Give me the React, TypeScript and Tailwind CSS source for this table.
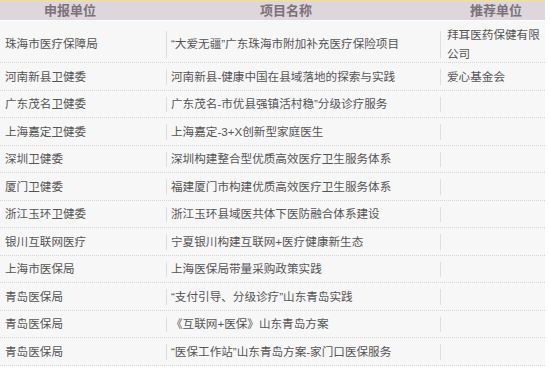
const rows: [string, string, string][] = [
  ["珠海市医疗保障局", "“大爱无疆”广东珠海市附加补充医疗保险项目", "拜耳医药保健有限公司"],
  ["河南新县卫健委", "河南新县-健康中国在县域落地的探索与实践", "爱心基金会"],
  ["广东茂名卫健委", "广东茂名-市优县强镇活村稳”分级诊疗服务", ""],
  ["上海嘉定卫健委", "上海嘉定-3+X创新型家庭医生", ""],
  ["深圳卫健委", "深圳构建整合型优质高效医疗卫生服务体系", ""],
  ["厦门卫健委", "福建厦门市构建优质高效医疗卫生服务体系", ""],
  ["浙江玉环卫健委", "浙江玉环县域医共体下医防融合体系建设", ""],
  ["银川互联网医疗", "宁夏银川构建互联网+医疗健康新生态", ""],
  ["上海市医保局", "上海医保局带量采购政策实践", ""],
  ["青岛医保局", "“支付引导、分级诊疗”山东青岛实践", ""],
  ["青岛医保局", "《互联网+医保》山东青岛方案", ""],
  ["青岛医保局", "“医保工作站”山东青岛方案-家门口医保服务", ""],
];

function Divider() {
  return <div className="w-px self-stretch my-[5px] bg-[#dedede] shrink-0" />;
}

export default function App() {
  return (
    <div
      className="w-[550px] h-[390px] bg-white overflow-hidden"
      style={{ fontFamily: '"Liberation Sans", "Noto Sans CJK SC", sans-serif' }}
    >
      <div className="w-[545px] bg-[#f7f7f7]">
        <div className="h-[2px] bg-[#ecdcaa]" />
        <div className="grid grid-cols-[166px_274px_105px] h-[18px] bg-[#ddd6dc] text-[13px] font-bold text-[#7c7279] leading-[18px]">
          <div className="pl-[44px]">申报单位</div>
          <div className="pl-[94px]">项目名称</div>
          <div className="pl-[30px]">推荐单位</div>
        </div>
        <div className="h-[1px] bg-white" />
        {rows.map((r, i) => (
          <div
            key={i}
            className={`grid grid-cols-[166px_274px_105px] border-b border-dotted border-[#d6d6d6] text-[11.6px] text-[#555] leading-[18.5px] ${
              i === 0 ? "h-[42px] pt-[5px]" : "h-[27.5px] pt-[1px]"
            }`}
          >
            <div className="flex items-center pl-[5px]">{r[0]}</div>
            <div className="flex">
              <Divider />
              <div className="flex items-center pl-[4px] whitespace-nowrap">{r[1]}</div>
            </div>
            <div className="flex">
              <Divider />
              <div className="flex items-center pl-[6px] pr-[2px]">{r[2]}</div>
            </div>
          </div>
        ))}
      </div>
    </div>
  );
}
